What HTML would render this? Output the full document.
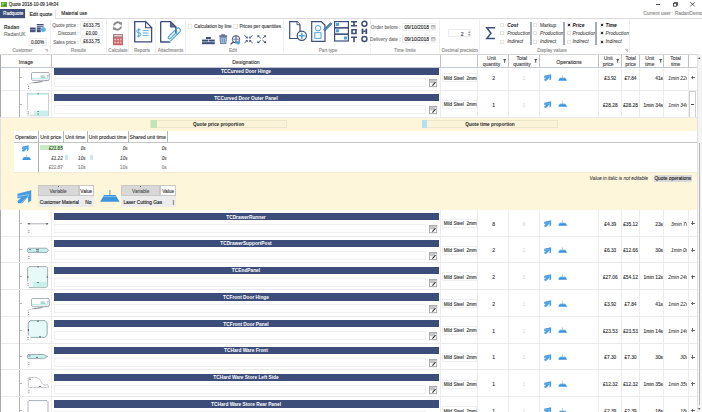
<!DOCTYPE html><html><head><meta charset="utf-8"><style>
html,body{margin:0;padding:0;}
body{width:702px;height:412px;overflow:hidden;position:relative;background:#fff;font-family:"Liberation Sans",sans-serif;}
.t{position:absolute;white-space:nowrap;line-height:1.2;-webkit-text-stroke:0.12px currentColor;}
.t[style*="italic"]{-webkit-text-stroke:0.07px currentColor;}
.t[style*="bold"]{-webkit-text-stroke:0;}
.b{position:absolute;box-sizing:border-box;}
svg.b{overflow:visible}
</style></head><body>
<svg class="b" style="left:1px;top:2px" width="6" height="5" viewBox="0 0 6 5"><rect x="0" y="0" width="6" height="5" fill="#5fae3a"/><rect x="1" y="1" width="2" height="1.5" fill="#9ad36a"/><rect x="3.2" y="2.5" width="2" height="1.5" fill="#3d8a22"/></svg>
<div class="t" style="left:8.8px;top:2.33px;font-size:4.45px;color:#222;font-weight:normal;font-style:normal;">Quote 2018-10-09 14h34</div>
<div class="b" style="left:656px;top:4px;width:4px;height:0.6px;background:#555"></div>
<svg class="b" style="left:672.6px;top:2.2px" width="5" height="4.4" viewBox="0 0 5 4.4"><rect x="0.4" y="1.3" width="3.2" height="2.9" fill="none" stroke="#333" stroke-width="0.8"/><path d="M1.4 1.3V0.4H4.5V3.4H3.6" fill="none" stroke="#333" stroke-width="0.8"/></svg>
<svg class="b" style="left:689.5px;top:1.8px" width="5" height="4.5" viewBox="0 0 5 4.5"><path d="M0.3 0.3L4.7 4.2M4.7 0.3L0.3 4.2" stroke="#333" stroke-width="0.8"/></svg>
<div class="b" style="left:0px;top:9px;width:25px;height:9px;background:#3c4d7a"></div>
<div class="t" style="left:3px;top:11.38px;font-size:4.7px;color:#fff;font-weight:normal;font-style:normal;">Radquote</div>
<div class="t" style="left:61.2px;top:11.45px;font-size:4.75px;color:#222;font-weight:normal;font-style:normal;">Material use</div>
<div class="t" style="left:502.5px;width:200px;text-align:right;top:10.93px;font-size:4.95px;color:#8a8a8a;font-weight:normal;font-style:normal;">Current user : RadanDemo</div>
<div class="b" style="left:0px;top:18px;width:702px;height:36px;background:#fff;border-top:1px solid #dadada"></div>
<div class="b" style="left:25px;top:9px;width:31px;height:10px;background:#fff;border-left:1px solid #f0f0f0;border-right:1px solid #e6e6e6"></div>
<div class="t" style="left:29.4px;top:11.24px;font-size:5.1px;color:#222;font-weight:normal;font-style:normal;">Edit quote</div>
<div class="b" style="left:50px;top:20px;width:1px;height:33px;background:#efefef"></div>
<div class="b" style="left:106px;top:20px;width:1px;height:33px;background:#efefef"></div>
<div class="b" style="left:128px;top:20px;width:1px;height:33px;background:#efefef"></div>
<div class="b" style="left:155px;top:20px;width:1px;height:33px;background:#efefef"></div>
<div class="b" style="left:185px;top:20px;width:1px;height:33px;background:#efefef"></div>
<div class="b" style="left:283px;top:20px;width:1px;height:33px;background:#efefef"></div>
<div class="b" style="left:370px;top:20px;width:1px;height:33px;background:#efefef"></div>
<div class="b" style="left:439px;top:20px;width:1px;height:33px;background:#efefef"></div>
<div class="b" style="left:479px;top:20px;width:1px;height:33px;background:#efefef"></div>
<div class="b" style="left:629px;top:20px;width:1px;height:33px;background:#efefef"></div>
<div class="t" style="left:4px;top:23.90px;font-size:5px;color:#333;font-weight:bold;font-style:normal;">Radan</div>
<div class="t" style="left:4px;top:31.00px;font-size:5px;color:#777;font-weight:normal;font-style:normal;">RadanUK</div>
<svg class="b" style="left:30px;top:23.8px" width="17" height="8.6" viewBox="0 0 17 8.6"><rect x="0" y="3.5" width="5.6" height="4.7" fill="#4a5280"/><rect x="0" y="5.4" width="5.6" height="0.7" fill="#9aa2c0"/><rect x="6.8" y="0" width="6.8" height="1.4" fill="#3c4d7a"/><rect x="6.8" y="2" width="6.8" height="1" fill="#6a78a0"/><rect x="6.8" y="3.4" width="4" height="4.8" fill="#3c4d7a"/><rect x="6.8" y="5.2" width="4" height="0.7" fill="#8a96b8"/><circle cx="13.2" cy="5.6" r="2.6" fill="#7dbcea"/><text x="13.2" y="6.9" font-size="3.6" text-anchor="middle" fill="#2f7fc0" font-family="Liberation Sans">%</text></svg>
<div class="b" style="left:28px;top:38px;width:19px;height:7.6px;border:1px solid #eeeeee;background:#fff"></div>
<div class="t" style="left:-62.5px;width:200px;text-align:center;top:39.74px;font-size:4.6px;color:#333;font-weight:normal;font-style:normal;">0.00%</div>
<div class="t" style="left:-77.5px;width:200px;text-align:center;top:48.14px;font-size:4.6px;color:#8c8c8c;font-weight:normal;font-style:normal;">Customer</div>
<svg class="b" style="left:45.3px;top:48.8px" width="3" height="3" viewBox="0 0 3 3"><path d="M0.3 0.3H2.7V2.7" fill="none" stroke="#888" stroke-width="0.5"/><path d="M0.5 0.5L2.6 2.6" stroke="#888" stroke-width="0.5"/></svg>
<div class="t" style="left:-121.5px;width:200px;text-align:right;top:22.94px;font-size:4.6px;color:#707070;font-weight:normal;font-style:normal;">Quote price :</div>
<div class="t" style="left:-121.5px;width:200px;text-align:right;top:31.24px;font-size:4.6px;color:#707070;font-weight:normal;font-style:normal;">Discount :</div>
<div class="t" style="left:-121.5px;width:200px;text-align:right;top:39.64px;font-size:4.6px;color:#707070;font-weight:normal;font-style:normal;">Sales price :</div>
<div class="b" style="left:80.4px;top:21.4px;width:22.4px;height:7.4px;border:1px solid #f0f0f0;background:#fff"></div>
<div class="t" style="left:-8.400000000000006px;width:200px;text-align:center;top:23.04px;font-size:4.6px;color:#333;font-weight:normal;font-style:normal;">£633.75</div>
<div class="b" style="left:80.4px;top:29.0px;width:22.4px;height:7.4px;border:1px solid #f0f0f0;background:#fff"></div>
<div class="t" style="left:-8.400000000000006px;width:200px;text-align:center;top:31.24px;font-size:4.6px;color:#333;font-weight:normal;font-style:normal;">£0.00</div>
<div class="b" style="left:80.4px;top:36.599999999999994px;width:22.4px;height:7.4px;border:1px solid #f0f0f0;background:#fff"></div>
<div class="t" style="left:-8.400000000000006px;width:200px;text-align:center;top:39.44px;font-size:4.6px;color:#333;font-weight:normal;font-style:normal;">£633.75</div>
<div class="t" style="left:-21.5px;width:200px;text-align:center;top:48.14px;font-size:4.6px;color:#8c8c8c;font-weight:normal;font-style:normal;">Results</div>
<svg class="b" style="left:112.2px;top:21.2px" width="11" height="10" viewBox="0 0 11 10"><g fill="none" stroke="#8a8a8a" stroke-width="2"><path d="M1.9 4.4A3.7 3.7 0 0 1 8.6 3"/><path d="M9.1 5.6A3.7 3.7 0 0 1 2.4 7"/></g><path d="M6.6 0.8L10.2 1.4L9.4 4.9Z" fill="#8a8a8a"/><path d="M4.4 9.2L0.8 8.6L1.6 5.1Z" fill="#8a8a8a"/></svg>
<svg class="b" style="left:112.6px;top:33.8px" width="10" height="11.2" viewBox="0 0 10 11.2"><rect x="0" y="0" width="10" height="11.2" rx="0.8" fill="#c96262"/><rect x="0" y="0" width="10" height="3.2" rx="0.8" fill="#9e8a8a"/><rect x="1.2" y="1" width="7.6" height="1.4" fill="#e9d0d0"/><g fill="#e8b4b4"><rect x="1.2" y="4.6" width="2" height="1.8"/><rect x="4" y="4.6" width="2" height="1.8"/><rect x="6.8" y="4.6" width="2" height="1.8"/><rect x="1.2" y="7.6" width="2" height="1.8"/><rect x="4" y="7.6" width="2" height="1.8"/><rect x="6.8" y="7.6" width="2" height="1.8"/></g></svg>
<div class="t" style="left:17.900000000000006px;width:200px;text-align:center;top:48.14px;font-size:4.6px;color:#8c8c8c;font-weight:normal;font-style:normal;">Calculate</div>
<svg class="b" style="left:134px;top:20.6px" width="18.4" height="21.6" viewBox="0 0 18.4 21.6"><path d="M0.7 0.7H11.6L17.6 6.7V20.9H0.7Z" fill="#fff" stroke="#3c4d7a" stroke-width="1.3"/><path d="M11.6 0.7V6.7H17.6Z" fill="#fff" stroke="#3c4d7a" stroke-width="1.1"/><path d="M6.6 8.6H4.4Q2.8 8.6 2.8 10.2Q2.8 11.8 4.4 11.8H5.2Q6.8 11.8 6.8 13.4Q6.8 15 5.2 15H2.8M4.8 7.2V16.4" fill="none" stroke="#4aa3df" stroke-width="1"/><path d="M8.6 9.6H14.6M8.6 12H14.6M8.6 14.4H14.6" stroke="#4aa3df" stroke-width="0.9"/></svg>
<div class="t" style="left:42px;width:200px;text-align:center;top:48.14px;font-size:4.6px;color:#8c8c8c;font-weight:normal;font-style:normal;">Reports</div>
<svg class="b" style="left:159.6px;top:20.6px" width="22.4" height="21.6" viewBox="0 0 22.4 21.6"><path d="M0.7 0.7H10.4L15.8 6.1V13.4M10.8 20.9H0.7Z" fill="#fff" stroke="#3c4d7a" stroke-width="1.3"/><path d="M0.7 0.7H10.4L15.8 6.1V14L10.6 20.9H0.7Z" fill="#fff"/><path d="M0.7 0.7V20.9H9.8M0.7 0.7H10.4L15.8 6.1V12.6" fill="none" stroke="#3c4d7a" stroke-width="1.3"/><path d="M10.4 0.7V6.1H15.8Z" fill="#5a6690" stroke="#3c4d7a" stroke-width="0.8"/><path d="M10.4 20.2L20 10.6A2.3 2.3 0 0 0 16.8 7.4L8.4 15.8A1.3 1.3 0 0 0 10.2 17.6L17.2 10.6" fill="none" stroke="#4aa3df" stroke-width="1.2"/></svg>
<div class="t" style="left:70.5px;width:200px;text-align:center;top:48.14px;font-size:4.6px;color:#8c8c8c;font-weight:normal;font-style:normal;">Attachments</div>
<div class="b" style="left:188px;top:24.3px;width:4.4px;height:4.4px;border:0.6px solid #e8e8e8;background:#fff"></div>
<div class="t" style="left:194.3px;top:24.34px;font-size:4.6px;color:#444;font-weight:normal;font-style:normal;">Calculation by line</div>
<div class="b" style="left:233.4px;top:24.3px;width:4.4px;height:4.4px;border:0.6px solid #e8e8e8;background:#fff"></div>
<div class="t" style="left:239.5px;top:24.34px;font-size:4.6px;color:#444;font-weight:normal;font-style:normal;">Prices per quantities</div>
<svg class="b" style="left:202.3px;top:36.6px" width="12.8" height="7.2" viewBox="0 0 12.8 7.2"><g fill="#3c4d7a"><rect x="4" y="0" width="4.8" height="2"/><rect x="0" y="2.6" width="6" height="2"/><rect x="6.6" y="2.6" width="6.2" height="2"/><rect x="0" y="5.2" width="12.8" height="2"/></g></svg>
<svg class="b" style="left:218.6px;top:34.2px" width="8.4" height="10" viewBox="0 0 8.4 10"><rect x="0.2" y="1.4" width="8" height="1.3" fill="#3c4d7a"/><rect x="2.8" y="0.2" width="2.8" height="1.4" fill="none" stroke="#3c4d7a" stroke-width="0.6"/><path d="M1 3.2H7.4L6.9 9.5H1.5Z" fill="#a9d3f0" stroke="#3c4d7a" stroke-width="0.7"/><path d="M3.2 4.2V8.6M5.2 4.2V8.6" stroke="#3c4d7a" stroke-width="0.6"/></svg>
<svg class="b" style="left:230.2px;top:34.6px" width="10.6" height="9.6" viewBox="0 0 10.6 9.6"><circle cx="6" cy="4.3" r="3.7" fill="#fff" stroke="#3c4d7a" stroke-width="1"/><path d="M3 4.3H9M6 0.8Q4.2 4.3 6 7.8M6 0.8Q7.8 4.3 6 7.8" fill="none" stroke="#3c4d7a" stroke-width="0.6"/><path d="M3.4 7L0.6 9.2" stroke="#3c4d7a" stroke-width="1.3"/><circle cx="8.2" cy="7.6" r="1.9" fill="#4aa3df"/></svg>
<svg class="b" style="left:244px;top:35.3px" width="9" height="8.4" viewBox="0 0 9 8.4"><g stroke="#3c4d7a" stroke-width="0.9"><path d="M0.4 0.4L3 2.6M8.6 0.4L6 2.6M0.4 8L3 5.8M8.6 8L6 5.8"/></g><g fill="#3c4d7a"><path d="M3.8 3.4L1.4 3.2L3.6 1.2Z"/><path d="M5.2 3.4L7.6 3.2L5.4 1.2Z"/><path d="M3.8 5L1.4 5.2L3.6 7.2Z"/><path d="M5.2 5L7.6 5.2L5.4 7.2Z"/></g></svg>
<svg class="b" style="left:256.6px;top:35.3px" width="9.4" height="8.4" viewBox="0 0 9.4 8.4"><g stroke="#3c4d7a" stroke-width="0.9"><path d="M1.4 1.2L3.8 3.2M8 1.2L5.6 3.2M1.4 7.2L3.8 5.2M8 7.2L5.6 5.2"/></g><g fill="#3c4d7a"><path d="M0.2 0.2L2.8 0.4L0.6 2.6Z"/><path d="M9.2 0.2L6.6 0.4L8.8 2.6Z"/><path d="M0.2 8.2L2.8 8L0.6 5.8Z"/><path d="M9.2 8.2L6.6 8L8.8 5.8Z"/></g></svg>
<div class="t" style="left:133px;width:200px;text-align:center;top:48.14px;font-size:4.6px;color:#8c8c8c;font-weight:normal;font-style:normal;">Edit</div>
<svg class="b" style="left:288.6px;top:21.4px" width="18" height="21" viewBox="0 0 18 21"><path d="M0.7 0.7H8L11 3.7V17.5H0.7Z" fill="#fff" stroke="#3c4d7a" stroke-width="1.2"/><path d="M8 0.7V3.7H11" fill="#fff" stroke="#3c4d7a" stroke-width="0.9"/><circle cx="12.8" cy="14.8" r="4.6" fill="#fff" stroke="#3c4d7a" stroke-width="1.2"/><path d="M12.8 11.8V17.8M9.8 14.8H15.8" stroke="#4aa3df" stroke-width="1.5"/></svg>
<svg class="b" style="left:310.7px;top:21.4px" width="21.3" height="21" viewBox="0 0 21.3 21"><path d="M0.7 0.7H10.5L14 4.2V20.3H0.7Z" fill="#fff" stroke="#3c4d7a" stroke-width="1.2"/><circle cx="7" cy="7.2" r="2.7" fill="none" stroke="#4aa3df" stroke-width="1"/><rect x="3.8" y="11.7" width="6.2" height="5.6" fill="none" stroke="#4aa3df" stroke-width="1"/><path d="M13 9.5L20.5 2" stroke="#3c4d7a" stroke-width="2.4"/><path d="M13.3 9.2L20.2 2.3" stroke="#4aa3df" stroke-width="1.2"/></svg>
<svg class="b" style="left:334px;top:21.4px" width="15" height="21" viewBox="0 0 15 21"><g fill="none" stroke="#3c4d7a" stroke-width="1.2"><rect x="0.6" y="0.6" width="13.8" height="6.2"/><rect x="0.6" y="6.8" width="13.8" height="6.4"/><rect x="0.6" y="13.2" width="13.8" height="6.8"/></g><rect x="2" y="2" width="3" height="3" fill="#4aa3df"/><rect x="2" y="8.3" width="3" height="3" fill="#4aa3df"/><rect x="10" y="15.5" width="3" height="3" fill="#4aa3df"/></svg>
<svg class="b" style="left:351.4px;top:21px" width="6" height="21.2" viewBox="0 0 6 21.2"><g fill="#3c4d7a"><path d="M0 0H6V1.5H4L3.6 2.6L4 4H6V5.5H0V4H2L2.4 2.6L2 1.5H0Z"/><path d="M0.2 7.9H5.8V13.3H0.2ZM1.8 9.5V11.7H4.2V9.5Z" fill-rule="evenodd"/><path d="M0 15.4H6V17H3.8V21.2H2.2V17H0Z"/></g></svg>
<svg class="b" style="left:360.8px;top:21.3px" width="6.8" height="21" viewBox="0 0 6.8 21"><g fill="none" stroke="#3c4d7a" stroke-width="1.5"><circle cx="3.4" cy="2.8" r="2.5"/><circle cx="3.4" cy="17.9" r="2.5"/></g><g fill="#3c4d7a"><rect x="0.6" y="7.6" width="1.8" height="5.4"/><rect x="4.4" y="7.6" width="1.8" height="5.4"/><rect x="2.2" y="9.5" width="2.4" height="1.6"/></g></svg>
<div class="t" style="left:228px;width:200px;text-align:center;top:48.14px;font-size:4.6px;color:#8c8c8c;font-weight:normal;font-style:normal;">Part type</div>
<div class="t" style="left:200.7px;width:200px;text-align:right;top:24.82px;font-size:4.8px;color:#777;font-weight:normal;font-style:normal;">Order before :</div>
<div class="t" style="left:200.7px;width:200px;text-align:right;top:37.22px;font-size:4.8px;color:#777;font-weight:normal;font-style:normal;">Delivery date :</div>
<div class="b" style="left:402.4px;top:23px;width:33.8px;height:8.4px;border:1px solid #f0f0f0;background:#fff"></div>
<div class="t" style="left:404.4px;top:24.86px;font-size:4.9px;color:#222;font-weight:normal;font-style:normal;">09/10/2018</div>
<svg class="b" style="left:430.6px;top:25px" width="4.2" height="4.2" viewBox="0 0 4.2 4.2"><rect x="0.3" y="0.5" width="3.6" height="3.4" rx="0.6" fill="#fff" stroke="#9a9a9a" stroke-width="0.6"/><rect x="0.3" y="0.5" width="3.6" height="1.1" fill="#9a9a9a"/><path d="M1 2.4H3.2M1 3.1H3.2" stroke="#bbb" stroke-width="0.4"/></svg>
<div class="b" style="left:402.4px;top:34.9px;width:33.8px;height:8.4px;border:1px solid #f0f0f0;background:#fff"></div>
<div class="t" style="left:404.4px;top:36.76px;font-size:4.9px;color:#222;font-weight:normal;font-style:normal;">09/10/2018</div>
<svg class="b" style="left:430.6px;top:36.9px" width="4.2" height="4.2" viewBox="0 0 4.2 4.2"><rect x="0.3" y="0.5" width="3.6" height="3.4" rx="0.6" fill="#fff" stroke="#9a9a9a" stroke-width="0.6"/><rect x="0.3" y="0.5" width="3.6" height="1.1" fill="#9a9a9a"/><path d="M1 2.4H3.2M1 3.1H3.2" stroke="#bbb" stroke-width="0.4"/></svg>
<div class="t" style="left:305px;width:200px;text-align:center;top:48.14px;font-size:4.6px;color:#8c8c8c;font-weight:normal;font-style:normal;">Time limits</div>
<div class="b" style="left:447.9px;top:29.3px;width:23.5px;height:7.7px;border:1px solid #ececec;background:#fff"></div>
<div class="t" style="left:263.6px;width:200px;text-align:right;top:30.80px;font-size:5px;color:#333;font-weight:normal;font-style:normal;">2</div>
<svg class="b" style="left:467.5px;top:30.6px" width="2.5" height="5" viewBox="0 0 2.5 5"><path d="M0 1.8L1.25 0.3L2.5 1.8Z M0 3.2L1.25 4.7L2.5 3.2Z" fill="#777"/></svg>
<div class="t" style="left:360px;width:200px;text-align:center;top:48.14px;font-size:4.6px;color:#8c8c8c;font-weight:normal;font-style:normal;">Decimal precision</div>
<svg class="b" style="left:486px;top:27px" width="9.4" height="12.4" viewBox="0 0 9.4 12.4"><path d="M9 0.8H0.8L5 6.2L0.8 11.6H9" fill="none" stroke="#3c4d7a" stroke-width="1.5"/></svg>
<div class="b" style="left:500.2px;top:22.8px;width:4.2px;height:4.2px;border:0.6px solid #e6e6e6;background:#fff"></div>
<div class="t" style="left:507.2px;top:22.56px;font-size:4.9px;color:#111;font-weight:bold;font-style:italic;">Cost</div>
<div class="b" style="left:500.2px;top:31.1px;width:4.2px;height:4.2px;border:0.6px solid #e6e6e6;background:#fff"></div>
<div class="t" style="left:507.2px;top:30.86px;font-size:4.9px;color:#444;font-weight:normal;font-style:italic;">Production</div>
<div class="b" style="left:500.2px;top:39.5px;width:4.2px;height:4.2px;border:0.6px solid #e6e6e6;background:#fff"></div>
<div class="t" style="left:507.2px;top:39.26px;font-size:4.9px;color:#444;font-weight:normal;font-style:italic;">Indirect</div>
<div class="b" style="left:532.6px;top:22.8px;width:4.2px;height:4.2px;border:0.6px solid #e6e6e6;background:#fff"></div>
<div class="t" style="left:540px;top:22.56px;font-size:4.9px;color:#555;font-weight:normal;font-style:normal;">Markup</div>
<div class="b" style="left:532.6px;top:31.1px;width:4.2px;height:4.2px;border:0.6px solid #e6e6e6;background:#fff"></div>
<div class="t" style="left:540px;top:30.86px;font-size:4.9px;color:#444;font-weight:normal;font-style:italic;">Production</div>
<div class="b" style="left:532.6px;top:39.5px;width:4.2px;height:4.2px;border:0.6px solid #e6e6e6;background:#fff"></div>
<div class="t" style="left:540px;top:39.26px;font-size:4.9px;color:#444;font-weight:normal;font-style:italic;">Indirect</div>
<div class="b" style="left:566.6px;top:22.8px;width:4.2px;height:4.2px;border:0.6px solid #e6e6e6;background:#fff"></div>
<div class="b" style="left:567.7px;top:23.900000000000002px;width:2px;height:2px;background:#333"></div>
<div class="t" style="left:572.5px;top:22.56px;font-size:4.9px;color:#111;font-weight:bold;font-style:italic;">Price</div>
<div class="b" style="left:566.6px;top:31.1px;width:4.2px;height:4.2px;border:0.6px solid #e6e6e6;background:#fff"></div>
<div class="t" style="left:572.5px;top:30.86px;font-size:4.9px;color:#444;font-weight:normal;font-style:italic;">Production</div>
<div class="b" style="left:566.6px;top:39.5px;width:4.2px;height:4.2px;border:0.6px solid #e6e6e6;background:#fff"></div>
<div class="t" style="left:572.5px;top:39.26px;font-size:4.9px;color:#444;font-weight:normal;font-style:italic;">Indirect</div>
<div class="b" style="left:599.6px;top:22.8px;width:4.2px;height:4.2px;border:0.6px solid #e6e6e6;background:#fff"></div>
<div class="b" style="left:600.7px;top:23.900000000000002px;width:2px;height:2px;background:#333"></div>
<div class="t" style="left:605.5px;top:22.56px;font-size:4.9px;color:#111;font-weight:bold;font-style:italic;">Time</div>
<div class="b" style="left:599.6px;top:31.1px;width:4.2px;height:4.2px;border:0.6px solid #e6e6e6;background:#fff"></div>
<div class="b" style="left:600.7px;top:32.2px;width:2px;height:2px;background:#333"></div>
<div class="t" style="left:605.5px;top:30.86px;font-size:4.9px;color:#444;font-weight:normal;font-style:italic;">Production</div>
<div class="b" style="left:599.6px;top:39.5px;width:4.2px;height:4.2px;border:0.6px solid #e6e6e6;background:#fff"></div>
<div class="b" style="left:600.7px;top:40.6px;width:2px;height:2px;background:#333"></div>
<div class="t" style="left:605.5px;top:39.26px;font-size:4.9px;color:#444;font-weight:normal;font-style:italic;">Indirect</div>
<div class="b" style="left:529.5px;top:21.5px;width:2px;height:23.5px;background:#a4aab8"></div>
<div class="b" style="left:562.5px;top:21.5px;width:2px;height:23.5px;background:#a4aab8"></div>
<div class="b" style="left:595.0px;top:21.5px;width:2px;height:23.5px;background:#a4aab8"></div>
<div class="t" style="left:452px;width:200px;text-align:center;top:48.14px;font-size:4.6px;color:#8c8c8c;font-weight:normal;font-style:normal;">Display values</div>
<svg class="b" style="left:625px;top:48.8px" width="3" height="3" viewBox="0 0 3 3"><path d="M0.3 0.3H2.7V2.7" fill="none" stroke="#888" stroke-width="0.5"/><path d="M0.5 0.5L2.6 2.6" stroke="#888" stroke-width="0.5"/></svg>
<div class="b" style="left:0px;top:54px;width:1px;height:358px;background:#a8a8a8"></div>
<div class="b" style="left:1px;top:67px;width:696px;height:24px;background:#fff"></div>
<svg class="b" style="left:26px;top:71.75px" width="24" height="18" viewBox="0 0 24 18"><rect x="5.5" y="0.5" width="17.8" height="7.8" rx="1.2" fill="#fff" stroke="#56606a" stroke-width="0.5"/><path d="M6 6.4H22" stroke="#9fe3da" stroke-width="0.7"/><text x="22.6" y="5.6" font-size="4.2" text-anchor="end" fill="#3a8f86" font-family="Liberation Sans">60.7</text><path d="M22.5 8.4L8 10.6Q5.6 10.8 5 11.4L1.2 12.6" fill="none" stroke="#56606a" stroke-width="0.5" stroke-dasharray="0.9 0.5"/><path d="M7.5 10.8L16 9.6" stroke="#333" stroke-width="0.5"/><rect x="1" y="12.6" width="3.8" height="5" fill="#fff"/><path d="M2.6 13.8V14.8M2.6 15.8V16.8" stroke="#333" stroke-width="0.7"/></svg>
<div class="b" style="left:20px;top:77px;width:2px;height:1px;background:#b4b4b4"></div>
<div class="b" style="left:53.5px;top:67.3px;width:385.5px;height:7.25px;background:#3c4d7a"></div>
<div class="t" style="left:146px;width:200px;text-align:center;top:68.87px;font-size:4.8px;color:#fff;font-weight:bold;font-style:normal;">TCCurved Door Hinge</div>
<div class="b" style="left:54px;top:78px;width:372px;height:9px;border:1px solid #f0f0f0;background:#fff"></div>
<svg class="b" style="left:429px;top:79.35px" width="8.2" height="8.2" viewBox="0 0 8.2 8.2"><rect x="0.5" y="0.5" width="7.2" height="7.2" fill="#fff" stroke="#a4a4a4" stroke-width="0.9"/><rect x="0.9" y="0.9" width="6.4" height="3.4" fill="#c4c4c4"/><path d="M6.2 1.6L7.2 2.6V4.8L5.6 6.6Z" fill="#fff"/><path d="M3.4 6.6L6.6 3.2" stroke="#3a3a3a" stroke-width="1.2"/></svg>
<div class="b" style="left:442px;top:73px;width:35px;height:9px;border:1px solid #f0f0f0;background:#fff"></div>
<div class="t" style="left:443.7px;top:75.59px;font-size:4.6px;color:#333;font-weight:normal;font-style:normal;">Mild Steel&nbsp; 2mm</div>
<div class="t" style="left:393.6px;width:200px;text-align:center;top:74.75px;font-size:5px;color:#333;font-weight:normal;font-style:normal;">2</div>
<div class="t" style="left:424px;width:200px;text-align:center;top:74.75px;font-size:5px;color:#dcdcdc;font-weight:normal;font-style:normal;">2</div>
<svg class="b" style="left:543.6px;top:74.35px" width="7.3" height="6.9" viewBox="0.2 1.2 16 15"><path d="M0.6 5.2L15.8 1.6V12.8L12.4 15.4L12.2 9L6 15.8L1.4 15.8L0.6 13.2L4.8 9.8L0.6 10.6Z" fill="#449be3"/><path d="M0.8 8.2L13.2 6.4M4.6 15.6L13.4 7.6" stroke="#b5ddf8" stroke-width="0.75" fill="none"/></svg>
<svg class="b" style="left:557.8px;top:74.65px" width="9.2" height="6.2" viewBox="0 0 19.6 12"><path d="M4 5H15.5L19.6 11.8H0.2Z" fill="#3b95de"/><path d="M3.2 6.6H16.4" stroke="#86c3ef" stroke-width="0.9"/><rect x="9.4" y="0" width="1" height="5.2" fill="#7c9c98"/></svg>
<div class="t" style="left:510.29999999999995px;width:200px;text-align:center;top:75.87px;font-size:4.8px;color:#333;font-weight:normal;font-style:normal;">£3.92</div>
<div class="t" style="left:530.5px;width:200px;text-align:center;top:75.87px;font-size:4.8px;color:#333;font-weight:normal;font-style:normal;">£7.84</div>
<div class="t" style="left:463px;width:200px;text-align:right;top:75.87px;font-size:4.8px;color:#333;font-weight:normal;font-style:normal;">41s</div>
<div class="b" style="left:664px;top:73.25px;width:22.6px;height:9px;overflow:hidden"><div class="t" style="right:-1.6px;top:2.60px;font-size:4.9px;color:#333;font-style:italic">1min 22s</div></div>
<div class="b" style="left:691px;top:77.15px;width:3.6px;height:0.8px;background:#6a6a6a"></div>
<div class="b" style="left:692.4px;top:75.65px;width:0.8px;height:3.8px;background:#6a6a6a"></div>
<div class="b" style="left:1px;top:90px;width:696px;height:28px;background:#fff"></div>
<svg class="b" style="left:26px;top:93.0px" width="24" height="23" viewBox="0 0 24 23"><rect x="1.5" y="0.3" width="20.8" height="22.6" fill="#fff" stroke="#7a8a90" stroke-width="0.4"/><rect x="1.7" y="0.5" width="20.4" height="1.6" fill="#c8f0ec"/><rect x="8" y="17.5" width="14.1" height="5.2" fill="#c8f0ec"/><path d="M11.5 0.8H13M11.5 18.5H13M11.5 21H13" stroke="#333" stroke-width="0.6"/><rect x="0.6" y="17" width="4" height="5.4" fill="#fff" stroke="#e6e8ea" stroke-width="0.4"/><path d="M2.1 18.4V19.3M2.1 20.3V21.2" stroke="#333" stroke-width="0.8"/></svg>
<div class="b" style="left:20px;top:104px;width:2px;height:1px;background:#b4b4b4"></div>
<div class="b" style="left:53.5px;top:94.0px;width:385.5px;height:7.299999999999997px;background:#3c4d7a"></div>
<div class="t" style="left:146px;width:200px;text-align:center;top:95.62px;font-size:4.8px;color:#fff;font-weight:bold;font-style:normal;">TCCurved Door Outer Panel</div>
<div class="b" style="left:54px;top:105px;width:372px;height:9px;border:1px solid #f0f0f0;background:#fff"></div>
<svg class="b" style="left:429px;top:106.1px" width="8.2" height="8.2" viewBox="0 0 8.2 8.2"><rect x="0.5" y="0.5" width="7.2" height="7.2" fill="#fff" stroke="#a4a4a4" stroke-width="0.9"/><rect x="0.9" y="0.9" width="6.4" height="3.4" fill="#c4c4c4"/><path d="M6.2 1.6L7.2 2.6V4.8L5.6 6.6Z" fill="#fff"/><path d="M3.4 6.6L6.6 3.2" stroke="#3a3a3a" stroke-width="1.2"/></svg>
<div class="b" style="left:442px;top:100px;width:35px;height:9px;border:1px solid #f0f0f0;background:#fff"></div>
<div class="t" style="left:443.7px;top:102.34px;font-size:4.6px;color:#333;font-weight:normal;font-style:normal;">Mild Steel&nbsp; 2mm</div>
<div class="t" style="left:393.6px;width:200px;text-align:center;top:101.50px;font-size:5px;color:#333;font-weight:normal;font-style:normal;">1</div>
<div class="t" style="left:424px;width:200px;text-align:center;top:101.50px;font-size:5px;color:#dcdcdc;font-weight:normal;font-style:normal;">1</div>
<svg class="b" style="left:543.6px;top:101.1px" width="7.3" height="6.9" viewBox="0.2 1.2 16 15"><path d="M0.6 5.2L15.8 1.6V12.8L12.4 15.4L12.2 9L6 15.8L1.4 15.8L0.6 13.2L4.8 9.8L0.6 10.6Z" fill="#449be3"/><path d="M0.8 8.2L13.2 6.4M4.6 15.6L13.4 7.6" stroke="#b5ddf8" stroke-width="0.75" fill="none"/></svg>
<svg class="b" style="left:557.8px;top:101.4px" width="9.2" height="6.2" viewBox="0 0 19.6 12"><path d="M4 5H15.5L19.6 11.8H0.2Z" fill="#3b95de"/><path d="M3.2 6.6H16.4" stroke="#86c3ef" stroke-width="0.9"/><rect x="9.4" y="0" width="1" height="5.2" fill="#7c9c98"/></svg>
<div class="t" style="left:510.29999999999995px;width:200px;text-align:center;top:102.62px;font-size:4.8px;color:#333;font-weight:normal;font-style:normal;">£28.28</div>
<div class="t" style="left:530.5px;width:200px;text-align:center;top:102.62px;font-size:4.8px;color:#333;font-weight:normal;font-style:normal;">£28.28</div>
<div class="t" style="left:463px;width:200px;text-align:right;top:102.62px;font-size:4.8px;color:#333;font-weight:normal;font-style:normal;">1min 34s</div>
<div class="b" style="left:664px;top:100.00px;width:22.6px;height:9px;overflow:hidden"><div class="t" style="right:-1.6px;top:2.60px;font-size:4.9px;color:#333;font-style:italic">1min 34s</div></div>
<div class="b" style="left:689px;top:91px;width:7px;height:27px;border:1px solid #d0d0d0;background:#fff"></div>
<div class="b" style="left:690.5px;top:104px;width:3.5px;height:1px;background:#444"></div>
<div class="b" style="left:19px;top:67px;width:1px;height:24px;background:#b0b0b0"></div>
<div class="b" style="left:1px;top:90px;width:696px;height:1px;background:#eaeaea"></div>
<div class="b" style="left:51px;top:67px;width:1px;height:23px;background:#ececec"></div>
<div class="b" style="left:440px;top:67px;width:1px;height:23px;background:#ececec"></div>
<div class="b" style="left:477px;top:67px;width:1px;height:23px;background:#ececec"></div>
<div class="b" style="left:508px;top:67px;width:1px;height:23px;background:#ececec"></div>
<div class="b" style="left:539px;top:67px;width:1px;height:23px;background:#ececec"></div>
<div class="b" style="left:598px;top:67px;width:1px;height:23px;background:#ececec"></div>
<div class="b" style="left:621px;top:67px;width:1px;height:23px;background:#ececec"></div>
<div class="b" style="left:639px;top:67px;width:1px;height:23px;background:#ececec"></div>
<div class="b" style="left:663px;top:67px;width:1px;height:23px;background:#ececec"></div>
<div class="b" style="left:688px;top:67px;width:1px;height:23px;background:#ececec"></div>
<div class="b" style="left:19px;top:90px;width:1px;height:28px;background:#b0b0b0"></div>
<div class="b" style="left:1px;top:117px;width:696px;height:1px;background:#eaeaea"></div>
<div class="b" style="left:51px;top:90px;width:1px;height:27px;background:#ececec"></div>
<div class="b" style="left:440px;top:90px;width:1px;height:27px;background:#ececec"></div>
<div class="b" style="left:477px;top:90px;width:1px;height:27px;background:#ececec"></div>
<div class="b" style="left:508px;top:90px;width:1px;height:27px;background:#ececec"></div>
<div class="b" style="left:539px;top:90px;width:1px;height:27px;background:#ececec"></div>
<div class="b" style="left:598px;top:90px;width:1px;height:27px;background:#ececec"></div>
<div class="b" style="left:621px;top:90px;width:1px;height:27px;background:#ececec"></div>
<div class="b" style="left:639px;top:90px;width:1px;height:27px;background:#ececec"></div>
<div class="b" style="left:663px;top:90px;width:1px;height:27px;background:#ececec"></div>
<div class="b" style="left:688px;top:90px;width:1px;height:27px;background:#ececec"></div>
<div class="b" style="left:1px;top:117.5px;width:695.5px;height:92px;background:#fef6db"></div>
<div class="b" style="left:150.3px;top:120px;width:136.7px;height:8.4px;border:0.6px solid #ece6cc;background:#fbf4d8"></div>
<div class="b" style="left:150.6px;top:120.3px;width:6.4px;height:7.8px;background:#bfe5b8"></div>
<div class="t" style="left:118.6px;width:200px;text-align:center;top:122.08px;font-size:4.7px;color:#222;font-weight:bold;font-style:normal;">Quote price proportion</div>
<div class="b" style="left:421.6px;top:120px;width:136.7px;height:8.4px;border:0.6px solid #ece6cc;background:#fbf4d8"></div>
<div class="b" style="left:421.9px;top:120.3px;width:5.1px;height:7.8px;background:#b6e0ef"></div>
<div class="t" style="left:390px;width:200px;text-align:center;top:122.08px;font-size:4.7px;color:#222;font-weight:bold;font-style:normal;">Quote time proportion</div>
<div class="b" style="left:13.5px;top:130.6px;width:683px;height:41.6px;background:#fff"></div>
<div class="b" style="left:13.5px;top:130.6px;width:154px;height:11.6px;background:#fff"></div>
<div class="b" style="left:13.5px;top:142px;width:683px;height:1px;background:#c4c4c4"></div>
<div class="b" style="left:38.2px;top:130.6px;width:0.8px;height:11.4px;background:#b9b9b9"></div>
<div class="b" style="left:63.4px;top:130.6px;width:0.8px;height:11.4px;background:#b9b9b9"></div>
<div class="b" style="left:86.8px;top:130.6px;width:0.8px;height:11.4px;background:#b9b9b9"></div>
<div class="b" style="left:128.4px;top:130.6px;width:0.8px;height:11.4px;background:#b9b9b9"></div>
<div class="b" style="left:167.2px;top:130.6px;width:0.8px;height:11.4px;background:#b9b9b9"></div>
<div class="b" style="left:38px;top:143px;width:1px;height:29px;background:#b0b0b0"></div>
<div class="b" style="left:13.5px;top:172px;width:683px;height:1px;background:#f3ecd4"></div>
<div class="t" style="left:-74.1px;width:200px;text-align:center;top:134.10px;font-size:5.0px;color:#333;font-weight:normal;font-style:normal;">Operation</div>
<div class="t" style="left:-49.2px;width:200px;text-align:center;top:134.10px;font-size:5.0px;color:#333;font-weight:normal;font-style:normal;">Unit price</div>
<div class="t" style="left:-24.900000000000006px;width:200px;text-align:center;top:134.10px;font-size:5.0px;color:#333;font-weight:normal;font-style:normal;">Unit time</div>
<div class="t" style="left:7.599999999999994px;width:200px;text-align:center;top:134.10px;font-size:5.0px;color:#333;font-weight:normal;font-style:normal;">Unit product time</div>
<div class="t" style="left:47.80000000000001px;width:200px;text-align:center;top:134.10px;font-size:5.0px;color:#333;font-weight:normal;font-style:normal;">Shared unit time</div>
<svg class="b" style="left:21.4px;top:145px" width="8.6" height="6.6" viewBox="0.2 1.2 16 15"><path d="M0.6 5.2L15.8 1.6V12.8L12.4 15.4L12.2 9L6 15.8L1.4 15.8L0.6 13.2L4.8 9.8L0.6 10.6Z" fill="#449be3"/><path d="M0.8 8.2L13.2 6.4M4.6 15.6L13.4 7.6" stroke="#b5ddf8" stroke-width="0.75" fill="none"/></svg>
<svg class="b" style="left:22px;top:154px" width="9" height="6.7" viewBox="0 0 19.6 12"><path d="M4 5H15.5L19.6 11.8H0.2Z" fill="#3b95de"/><path d="M3.2 6.6H16.4" stroke="#86c3ef" stroke-width="0.9"/><rect x="9.4" y="0" width="1" height="5.2" fill="#7c9c98"/></svg>
<div class="b" style="left:40.3px;top:145.3px;width:22.4px;height:5px;background:#c5ecc0"></div>
<div class="t" style="left:-137.3px;width:200px;text-align:right;top:145.74px;font-size:4.6px;color:#333;font-weight:normal;font-style:italic;">£21.65</div>
<div class="t" style="left:-137.3px;width:200px;text-align:right;top:155.74px;font-size:4.6px;color:#333;font-weight:normal;font-style:italic;">£1.22</div>
<div class="t" style="left:-137.3px;width:200px;text-align:right;top:165.44px;font-size:4.6px;color:#888;font-weight:normal;font-style:normal;">£22.87</div>
<div class="b" style="left:65.2px;top:155px;width:2.6px;height:5.4px;background:#c8e8f4"></div>
<div class="b" style="left:89.8px;top:155px;width:3px;height:5.4px;background:#c8e8f4"></div>
<div class="t" style="left:-114.5px;width:200px;text-align:right;top:145.74px;font-size:4.6px;color:#333;font-weight:normal;font-style:italic;">0s</div>
<div class="t" style="left:-114.5px;width:200px;text-align:right;top:155.74px;font-size:4.6px;color:#333;font-weight:normal;font-style:italic;">10s</div>
<div class="t" style="left:-114.5px;width:200px;text-align:right;top:165.44px;font-size:4.6px;color:#888;font-weight:normal;font-style:normal;">10s</div>
<div class="t" style="left:-72.5px;width:200px;text-align:right;top:145.74px;font-size:4.6px;color:#333;font-weight:normal;font-style:italic;">0s</div>
<div class="t" style="left:-72.5px;width:200px;text-align:right;top:155.74px;font-size:4.6px;color:#333;font-weight:normal;font-style:italic;">10s</div>
<div class="t" style="left:-72.5px;width:200px;text-align:right;top:165.44px;font-size:4.6px;color:#888;font-weight:normal;font-style:normal;">10s</div>
<div class="t" style="left:-33.5px;width:200px;text-align:right;top:145.74px;font-size:4.6px;color:#333;font-weight:normal;font-style:italic;">0s</div>
<div class="t" style="left:-33.5px;width:200px;text-align:right;top:155.74px;font-size:4.6px;color:#333;font-weight:normal;font-style:italic;">0s</div>
<div class="t" style="left:-33.5px;width:200px;text-align:right;top:165.44px;font-size:4.6px;color:#888;font-weight:normal;font-style:normal;">0s</div>
<div class="t" style="left:448px;width:200px;text-align:right;top:176.05px;font-size:4.75px;color:#333;font-weight:normal;font-style:italic;">Value in italic is not editable</div>
<div class="b" style="left:654px;top:174.6px;width:37.6px;height:7.2px;background:#d9d9d9"></div>
<div class="t" style="left:572.8px;width:200px;text-align:center;top:176.02px;font-size:4.8px;color:#222;font-weight:normal;font-style:normal;">Quote operations</div>
<svg class="b" style="left:17.2px;top:189.6px" width="14.7" height="13.6" viewBox="0.2 1.2 16 15"><path d="M0.6 5.2L15.8 1.6V12.8L12.4 15.4L12.2 9L6 15.8L1.4 15.8L0.6 13.2L4.8 9.8L0.6 10.6Z" fill="#449be3"/><path d="M0.8 8.2L13.2 6.4M4.6 15.6L13.4 7.6" stroke="#b5ddf8" stroke-width="0.75" fill="none"/></svg>
<div class="b" style="left:37.7px;top:184.7px;width:40.9px;height:11.7px;background:#d8d8d8;border:0.6px solid #c8c8c8"></div>
<div class="b" style="left:78.6px;top:184.7px;width:15.4px;height:11.7px;background:#fff;border:0.6px solid #c8c8c8"></div>
<div class="t" style="left:-41.849999999999994px;width:200px;text-align:center;top:188.82px;font-size:4.8px;color:#555;font-weight:normal;font-style:normal;">Variable</div>
<div class="t" style="left:-13.700000000000003px;width:200px;text-align:center;top:188.62px;font-size:4.8px;color:#333;font-weight:normal;font-style:normal;">Value</div>
<div class="b" style="left:57.85000000000001px;top:185.6px;width:0.8px;height:0.8px;background:#666"></div>
<div class="b" style="left:37.7px;top:196.4px;width:56.3px;height:10.6px;background:#ececec"></div>
<div class="t" style="left:39.7px;top:199.62px;font-size:4.8px;color:#222;font-weight:normal;font-style:normal;">Customer Material</div>
<div class="t" style="left:-108.5px;width:200px;text-align:right;top:199.62px;font-size:4.8px;color:#222;font-weight:normal;font-style:normal;">No</div>
<svg class="b" style="left:100px;top:190px" width="19.6" height="12" viewBox="0 0 19.6 12"><path d="M4 5H15.5L19.6 11.8H0.2Z" fill="#3b95de"/><path d="M3.2 6.6H16.4" stroke="#86c3ef" stroke-width="0.9"/><rect x="9.4" y="0" width="1" height="5.2" fill="#7c9c98"/></svg>
<div class="b" style="left:121.4px;top:184.7px;width:38.6px;height:11.7px;background:#d8d8d8;border:0.6px solid #c8c8c8"></div>
<div class="b" style="left:160.0px;top:184.7px;width:16.4px;height:11.7px;background:#fff;border:0.6px solid #c8c8c8"></div>
<div class="t" style="left:40.70000000000002px;width:200px;text-align:center;top:188.82px;font-size:4.8px;color:#555;font-weight:normal;font-style:normal;">Variable</div>
<div class="t" style="left:68.20000000000002px;width:200px;text-align:center;top:188.62px;font-size:4.8px;color:#333;font-weight:normal;font-style:normal;">Value</div>
<div class="b" style="left:140.4px;top:185.6px;width:0.8px;height:0.8px;background:#666"></div>
<div class="b" style="left:121.4px;top:196.4px;width:55px;height:10.6px;background:#ececec"></div>
<div class="t" style="left:123.4px;top:199.62px;font-size:4.8px;color:#222;font-weight:normal;font-style:normal;">Laser Cutting Gas</div>
<div class="t" style="left:-26.099999999999994px;width:200px;text-align:right;top:199.62px;font-size:4.8px;color:#222;font-weight:normal;font-style:normal;">|</div>
<div class="b" style="left:0px;top:117.5px;width:1.2px;height:92px;background:#9a9a9a"></div>
<div class="b" style="left:1px;top:210px;width:696px;height:27px;background:#fff"></div>
<svg class="b" style="left:26px;top:219.5px" width="24" height="15" viewBox="0 0 24 15"><path d="M1.2 3.8H22" stroke="#56606a" stroke-width="0.5"/><path d="M20.4 2.9L22.6 3.8L20.4 4.7Z" fill="#333"/><path d="M2 3.8H4" stroke="#333" stroke-width="0.8"/><rect x="1.4" y="8.5" width="4" height="5.4" fill="#fff" stroke="#e6e8ea" stroke-width="0.4"/><path d="M2.9 9.9V10.8M2.9 11.8V12.7" stroke="#333" stroke-width="0.8"/></svg>
<div class="b" style="left:20px;top:223px;width:2px;height:1px;background:#b4b4b4"></div>
<div class="b" style="left:53.5px;top:213.0px;width:385.5px;height:7.300000000000011px;background:#3c4d7a"></div>
<div class="t" style="left:146px;width:200px;text-align:center;top:214.62px;font-size:4.8px;color:#fff;font-weight:bold;font-style:normal;">TCDrawerRunner</div>
<div class="b" style="left:54px;top:224px;width:372px;height:9px;border:1px solid #f0f0f0;background:#fff"></div>
<svg class="b" style="left:429px;top:225.1px" width="8.2" height="8.2" viewBox="0 0 8.2 8.2"><rect x="0.5" y="0.5" width="7.2" height="7.2" fill="#fff" stroke="#a4a4a4" stroke-width="0.9"/><rect x="0.9" y="0.9" width="6.4" height="3.4" fill="#c4c4c4"/><path d="M6.2 1.6L7.2 2.6V4.8L5.6 6.6Z" fill="#fff"/><path d="M3.4 6.6L6.6 3.2" stroke="#3a3a3a" stroke-width="1.2"/></svg>
<div class="b" style="left:442px;top:219px;width:35px;height:9px;border:1px solid #f0f0f0;background:#fff"></div>
<div class="t" style="left:443.7px;top:221.34px;font-size:4.6px;color:#333;font-weight:normal;font-style:normal;">Mild Steel&nbsp; 2mm</div>
<div class="t" style="left:393.6px;width:200px;text-align:center;top:220.50px;font-size:5px;color:#333;font-weight:normal;font-style:normal;">8</div>
<div class="t" style="left:424px;width:200px;text-align:center;top:220.50px;font-size:5px;color:#dcdcdc;font-weight:normal;font-style:normal;">8</div>
<svg class="b" style="left:543.6px;top:220.1px" width="7.3" height="6.9" viewBox="0.2 1.2 16 15"><path d="M0.6 5.2L15.8 1.6V12.8L12.4 15.4L12.2 9L6 15.8L1.4 15.8L0.6 13.2L4.8 9.8L0.6 10.6Z" fill="#449be3"/><path d="M0.8 8.2L13.2 6.4M4.6 15.6L13.4 7.6" stroke="#b5ddf8" stroke-width="0.75" fill="none"/></svg>
<svg class="b" style="left:557.8px;top:220.4px" width="9.2" height="6.2" viewBox="0 0 19.6 12"><path d="M4 5H15.5L19.6 11.8H0.2Z" fill="#3b95de"/><path d="M3.2 6.6H16.4" stroke="#86c3ef" stroke-width="0.9"/><rect x="9.4" y="0" width="1" height="5.2" fill="#7c9c98"/></svg>
<div class="t" style="left:510.29999999999995px;width:200px;text-align:center;top:221.62px;font-size:4.8px;color:#333;font-weight:normal;font-style:normal;">£4.39</div>
<div class="t" style="left:530.5px;width:200px;text-align:center;top:221.62px;font-size:4.8px;color:#333;font-weight:normal;font-style:normal;">£35.12</div>
<div class="t" style="left:463px;width:200px;text-align:right;top:221.62px;font-size:4.8px;color:#333;font-weight:normal;font-style:normal;">23s</div>
<div class="b" style="left:664px;top:219.00px;width:22.6px;height:9px;overflow:hidden"><div class="t" style="right:-1.6px;top:2.60px;font-size:4.9px;color:#333;font-style:italic">3min 7s</div></div>
<div class="b" style="left:691px;top:222.9px;width:3.6px;height:0.8px;background:#6a6a6a"></div>
<div class="b" style="left:692.4px;top:221.4px;width:0.8px;height:3.8px;background:#6a6a6a"></div>
<div class="b" style="left:1px;top:236px;width:696px;height:27px;background:#fff"></div>
<svg class="b" style="left:26px;top:246.25px" width="24" height="15" viewBox="0 0 24 15"><path d="M2 2.2H20.6L22.6 4.4L20.6 6.4H2L1.2 4.3Z" fill="#c8f0ec" stroke="#56606a" stroke-width="0.5"/><path d="M3 3.6H5M10 3.4H13M10 5.2H13" stroke="#333" stroke-width="0.6"/><rect x="1.4" y="8.6" width="4" height="5.4" fill="#fff" stroke="#e6e8ea" stroke-width="0.4"/><path d="M2.9 10V10.9M2.9 11.9V12.8" stroke="#333" stroke-width="0.8"/></svg>
<div class="b" style="left:20px;top:249px;width:2px;height:1px;background:#b4b4b4"></div>
<div class="b" style="left:53.5px;top:239.75px;width:385.5px;height:7.300000000000011px;background:#3c4d7a"></div>
<div class="t" style="left:146px;width:200px;text-align:center;top:241.37px;font-size:4.8px;color:#fff;font-weight:bold;font-style:normal;">TCDrawerSupportPost</div>
<div class="b" style="left:54px;top:251px;width:372px;height:9px;border:1px solid #f0f0f0;background:#fff"></div>
<svg class="b" style="left:429px;top:251.85px" width="8.2" height="8.2" viewBox="0 0 8.2 8.2"><rect x="0.5" y="0.5" width="7.2" height="7.2" fill="#fff" stroke="#a4a4a4" stroke-width="0.9"/><rect x="0.9" y="0.9" width="6.4" height="3.4" fill="#c4c4c4"/><path d="M6.2 1.6L7.2 2.6V4.8L5.6 6.6Z" fill="#fff"/><path d="M3.4 6.6L6.6 3.2" stroke="#3a3a3a" stroke-width="1.2"/></svg>
<div class="b" style="left:442px;top:246px;width:35px;height:9px;border:1px solid #f0f0f0;background:#fff"></div>
<div class="t" style="left:443.7px;top:248.09px;font-size:4.6px;color:#333;font-weight:normal;font-style:normal;">Mild Steel&nbsp; 2mm</div>
<div class="t" style="left:393.6px;width:200px;text-align:center;top:247.25px;font-size:5px;color:#333;font-weight:normal;font-style:normal;">2</div>
<div class="t" style="left:424px;width:200px;text-align:center;top:247.25px;font-size:5px;color:#dcdcdc;font-weight:normal;font-style:normal;">2</div>
<svg class="b" style="left:543.6px;top:246.85px" width="7.3" height="6.9" viewBox="0.2 1.2 16 15"><path d="M0.6 5.2L15.8 1.6V12.8L12.4 15.4L12.2 9L6 15.8L1.4 15.8L0.6 13.2L4.8 9.8L0.6 10.6Z" fill="#449be3"/><path d="M0.8 8.2L13.2 6.4M4.6 15.6L13.4 7.6" stroke="#b5ddf8" stroke-width="0.75" fill="none"/></svg>
<svg class="b" style="left:557.8px;top:247.15px" width="9.2" height="6.2" viewBox="0 0 19.6 12"><path d="M4 5H15.5L19.6 11.8H0.2Z" fill="#3b95de"/><path d="M3.2 6.6H16.4" stroke="#86c3ef" stroke-width="0.9"/><rect x="9.4" y="0" width="1" height="5.2" fill="#7c9c98"/></svg>
<div class="t" style="left:510.29999999999995px;width:200px;text-align:center;top:248.37px;font-size:4.8px;color:#333;font-weight:normal;font-style:normal;">£6.33</div>
<div class="t" style="left:530.5px;width:200px;text-align:center;top:248.37px;font-size:4.8px;color:#333;font-weight:normal;font-style:normal;">£12.66</div>
<div class="t" style="left:463px;width:200px;text-align:right;top:248.37px;font-size:4.8px;color:#333;font-weight:normal;font-style:normal;">30s</div>
<div class="b" style="left:664px;top:245.75px;width:22.6px;height:9px;overflow:hidden"><div class="t" style="right:-1.6px;top:2.60px;font-size:4.9px;color:#333;font-style:italic">1min 0s</div></div>
<div class="b" style="left:691px;top:249.65px;width:3.6px;height:0.8px;background:#6a6a6a"></div>
<div class="b" style="left:692.4px;top:248.15px;width:0.8px;height:3.8px;background:#6a6a6a"></div>
<div class="b" style="left:1px;top:263px;width:696px;height:27px;background:#fff"></div>
<svg class="b" style="left:26px;top:266.0px" width="24" height="23" viewBox="0 0 24 23"><path d="M3 0.6H20.2L21.6 2V20.2L20.2 21.6H3L1.6 20.2V2Z" fill="#e8faf8" stroke="#56606a" stroke-width="0.5"/><rect x="7" y="16" width="14.2" height="5.2" fill="#c8f0ec"/><path d="M11 0.9H13M11 16.6H13M21.2 10V12M1.9 10V12" stroke="#333" stroke-width="0.6"/><rect x="0.6" y="15.6" width="4" height="5.4" fill="#fff" stroke="#e6e8ea" stroke-width="0.4"/><path d="M2.1 17V17.9M2.1 18.9V19.8" stroke="#333" stroke-width="0.8"/></svg>
<div class="b" style="left:20px;top:276px;width:2px;height:1px;background:#b4b4b4"></div>
<div class="b" style="left:53.5px;top:266.5px;width:385.5px;height:7.300000000000011px;background:#3c4d7a"></div>
<div class="t" style="left:146px;width:200px;text-align:center;top:268.12px;font-size:4.8px;color:#fff;font-weight:bold;font-style:normal;">TCEndPanel</div>
<div class="b" style="left:54px;top:278px;width:372px;height:9px;border:1px solid #f0f0f0;background:#fff"></div>
<svg class="b" style="left:429px;top:278.6px" width="8.2" height="8.2" viewBox="0 0 8.2 8.2"><rect x="0.5" y="0.5" width="7.2" height="7.2" fill="#fff" stroke="#a4a4a4" stroke-width="0.9"/><rect x="0.9" y="0.9" width="6.4" height="3.4" fill="#c4c4c4"/><path d="M6.2 1.6L7.2 2.6V4.8L5.6 6.6Z" fill="#fff"/><path d="M3.4 6.6L6.6 3.2" stroke="#3a3a3a" stroke-width="1.2"/></svg>
<div class="b" style="left:442px;top:272px;width:35px;height:9px;border:1px solid #f0f0f0;background:#fff"></div>
<div class="t" style="left:443.7px;top:274.84px;font-size:4.6px;color:#333;font-weight:normal;font-style:normal;">Mild Steel&nbsp; 2mm</div>
<div class="t" style="left:393.6px;width:200px;text-align:center;top:274.00px;font-size:5px;color:#333;font-weight:normal;font-style:normal;">2</div>
<div class="t" style="left:424px;width:200px;text-align:center;top:274.00px;font-size:5px;color:#dcdcdc;font-weight:normal;font-style:normal;">2</div>
<svg class="b" style="left:543.6px;top:273.6px" width="7.3" height="6.9" viewBox="0.2 1.2 16 15"><path d="M0.6 5.2L15.8 1.6V12.8L12.4 15.4L12.2 9L6 15.8L1.4 15.8L0.6 13.2L4.8 9.8L0.6 10.6Z" fill="#449be3"/><path d="M0.8 8.2L13.2 6.4M4.6 15.6L13.4 7.6" stroke="#b5ddf8" stroke-width="0.75" fill="none"/></svg>
<svg class="b" style="left:557.8px;top:273.9px" width="9.2" height="6.2" viewBox="0 0 19.6 12"><path d="M4 5H15.5L19.6 11.8H0.2Z" fill="#3b95de"/><path d="M3.2 6.6H16.4" stroke="#86c3ef" stroke-width="0.9"/><rect x="9.4" y="0" width="1" height="5.2" fill="#7c9c98"/></svg>
<div class="t" style="left:510.29999999999995px;width:200px;text-align:center;top:275.12px;font-size:4.8px;color:#333;font-weight:normal;font-style:normal;">£27.06</div>
<div class="t" style="left:530.5px;width:200px;text-align:center;top:275.12px;font-size:4.8px;color:#333;font-weight:normal;font-style:normal;">£54.12</div>
<div class="t" style="left:463px;width:200px;text-align:right;top:275.12px;font-size:4.8px;color:#333;font-weight:normal;font-style:normal;">1min 12s</div>
<div class="b" style="left:664px;top:272.50px;width:22.6px;height:9px;overflow:hidden"><div class="t" style="right:-1.6px;top:2.60px;font-size:4.9px;color:#333;font-style:italic">2min 24s</div></div>
<div class="b" style="left:691px;top:276.4px;width:3.6px;height:0.8px;background:#6a6a6a"></div>
<div class="b" style="left:692.4px;top:274.9px;width:0.8px;height:3.8px;background:#6a6a6a"></div>
<div class="b" style="left:1px;top:290px;width:696px;height:27px;background:#fff"></div>
<svg class="b" style="left:26px;top:297.75px" width="24" height="18" viewBox="0 0 24 18"><rect x="5.5" y="0.5" width="17.8" height="7.8" rx="1.2" fill="#fff" stroke="#56606a" stroke-width="0.5"/><path d="M6 6.4H22" stroke="#9fe3da" stroke-width="0.7"/><text x="22.6" y="5.6" font-size="4.2" text-anchor="end" fill="#3a8f86" font-family="Liberation Sans">60.7</text><path d="M22.5 8.4L8 10.6Q5.6 10.8 5 11.4L1.2 12.6" fill="none" stroke="#56606a" stroke-width="0.5" stroke-dasharray="0.9 0.5"/><path d="M7.5 10.8L16 9.6" stroke="#333" stroke-width="0.5"/><rect x="1" y="12.6" width="3.8" height="5" fill="#fff"/><path d="M2.6 13.8V14.8M2.6 15.8V16.8" stroke="#333" stroke-width="0.7"/></svg>
<div class="b" style="left:20px;top:303px;width:2px;height:1px;background:#b4b4b4"></div>
<div class="b" style="left:53.5px;top:293.25px;width:385.5px;height:7.300000000000011px;background:#3c4d7a"></div>
<div class="t" style="left:146px;width:200px;text-align:center;top:294.87px;font-size:4.8px;color:#fff;font-weight:bold;font-style:normal;">TCFront Door Hinge</div>
<div class="b" style="left:54px;top:304px;width:372px;height:9px;border:1px solid #f0f0f0;background:#fff"></div>
<svg class="b" style="left:429px;top:305.35px" width="8.2" height="8.2" viewBox="0 0 8.2 8.2"><rect x="0.5" y="0.5" width="7.2" height="7.2" fill="#fff" stroke="#a4a4a4" stroke-width="0.9"/><rect x="0.9" y="0.9" width="6.4" height="3.4" fill="#c4c4c4"/><path d="M6.2 1.6L7.2 2.6V4.8L5.6 6.6Z" fill="#fff"/><path d="M3.4 6.6L6.6 3.2" stroke="#3a3a3a" stroke-width="1.2"/></svg>
<div class="b" style="left:442px;top:299px;width:35px;height:9px;border:1px solid #f0f0f0;background:#fff"></div>
<div class="t" style="left:443.7px;top:301.59px;font-size:4.6px;color:#333;font-weight:normal;font-style:normal;">Mild Steel&nbsp; 2mm</div>
<div class="t" style="left:393.6px;width:200px;text-align:center;top:300.75px;font-size:5px;color:#333;font-weight:normal;font-style:normal;">2</div>
<div class="t" style="left:424px;width:200px;text-align:center;top:300.75px;font-size:5px;color:#dcdcdc;font-weight:normal;font-style:normal;">2</div>
<svg class="b" style="left:543.6px;top:300.35px" width="7.3" height="6.9" viewBox="0.2 1.2 16 15"><path d="M0.6 5.2L15.8 1.6V12.8L12.4 15.4L12.2 9L6 15.8L1.4 15.8L0.6 13.2L4.8 9.8L0.6 10.6Z" fill="#449be3"/><path d="M0.8 8.2L13.2 6.4M4.6 15.6L13.4 7.6" stroke="#b5ddf8" stroke-width="0.75" fill="none"/></svg>
<svg class="b" style="left:557.8px;top:300.65px" width="9.2" height="6.2" viewBox="0 0 19.6 12"><path d="M4 5H15.5L19.6 11.8H0.2Z" fill="#3b95de"/><path d="M3.2 6.6H16.4" stroke="#86c3ef" stroke-width="0.9"/><rect x="9.4" y="0" width="1" height="5.2" fill="#7c9c98"/></svg>
<div class="t" style="left:510.29999999999995px;width:200px;text-align:center;top:301.87px;font-size:4.8px;color:#333;font-weight:normal;font-style:normal;">£3.92</div>
<div class="t" style="left:530.5px;width:200px;text-align:center;top:301.87px;font-size:4.8px;color:#333;font-weight:normal;font-style:normal;">£7.84</div>
<div class="t" style="left:463px;width:200px;text-align:right;top:301.87px;font-size:4.8px;color:#333;font-weight:normal;font-style:normal;">41s</div>
<div class="b" style="left:664px;top:299.25px;width:22.6px;height:9px;overflow:hidden"><div class="t" style="right:-1.6px;top:2.60px;font-size:4.9px;color:#333;font-style:italic">1min 22s</div></div>
<div class="b" style="left:691px;top:303.15px;width:3.6px;height:0.8px;background:#6a6a6a"></div>
<div class="b" style="left:692.4px;top:301.65px;width:0.8px;height:3.8px;background:#6a6a6a"></div>
<div class="b" style="left:1px;top:316px;width:696px;height:28px;background:#fff"></div>
<svg class="b" style="left:26px;top:319.5px" width="24" height="23" viewBox="0 0 24 23"><path d="M4.4 0.6H19L21.2 2.8V15L19 17.4H4.4L2.2 15V2.8Z" fill="#c8f0ec" stroke="#56606a" stroke-width="0.5"/><path d="M4.6 1.6H18.8L20.2 3V14.8L18.8 16.4H4.6L3.2 14.8V3Z" fill="#e8faf8"/><path d="M11 1.2H13M13 16.8H15M2.4 9V11" stroke="#333" stroke-width="0.7"/><rect x="0.6" y="15.6" width="4" height="5.4" fill="#fff" stroke="#e6e8ea" stroke-width="0.4"/><path d="M2.1 17V17.9M2.1 18.9V19.8" stroke="#333" stroke-width="0.8"/></svg>
<div class="b" style="left:20px;top:330px;width:2px;height:1px;background:#b4b4b4"></div>
<div class="b" style="left:53.5px;top:320.0px;width:385.5px;height:7.300000000000011px;background:#3c4d7a"></div>
<div class="t" style="left:146px;width:200px;text-align:center;top:321.62px;font-size:4.8px;color:#fff;font-weight:bold;font-style:normal;">TCFront Door Panel</div>
<div class="b" style="left:54px;top:331px;width:372px;height:9px;border:1px solid #f0f0f0;background:#fff"></div>
<svg class="b" style="left:429px;top:332.1px" width="8.2" height="8.2" viewBox="0 0 8.2 8.2"><rect x="0.5" y="0.5" width="7.2" height="7.2" fill="#fff" stroke="#a4a4a4" stroke-width="0.9"/><rect x="0.9" y="0.9" width="6.4" height="3.4" fill="#c4c4c4"/><path d="M6.2 1.6L7.2 2.6V4.8L5.6 6.6Z" fill="#fff"/><path d="M3.4 6.6L6.6 3.2" stroke="#3a3a3a" stroke-width="1.2"/></svg>
<div class="b" style="left:442px;top:326px;width:35px;height:9px;border:1px solid #f0f0f0;background:#fff"></div>
<div class="t" style="left:443.7px;top:328.34px;font-size:4.6px;color:#333;font-weight:normal;font-style:normal;">Mild Steel&nbsp; 2mm</div>
<div class="t" style="left:393.6px;width:200px;text-align:center;top:327.50px;font-size:5px;color:#333;font-weight:normal;font-style:normal;">1</div>
<div class="t" style="left:424px;width:200px;text-align:center;top:327.50px;font-size:5px;color:#dcdcdc;font-weight:normal;font-style:normal;">1</div>
<svg class="b" style="left:543.6px;top:327.1px" width="7.3" height="6.9" viewBox="0.2 1.2 16 15"><path d="M0.6 5.2L15.8 1.6V12.8L12.4 15.4L12.2 9L6 15.8L1.4 15.8L0.6 13.2L4.8 9.8L0.6 10.6Z" fill="#449be3"/><path d="M0.8 8.2L13.2 6.4M4.6 15.6L13.4 7.6" stroke="#b5ddf8" stroke-width="0.75" fill="none"/></svg>
<svg class="b" style="left:557.8px;top:327.4px" width="9.2" height="6.2" viewBox="0 0 19.6 12"><path d="M4 5H15.5L19.6 11.8H0.2Z" fill="#3b95de"/><path d="M3.2 6.6H16.4" stroke="#86c3ef" stroke-width="0.9"/><rect x="9.4" y="0" width="1" height="5.2" fill="#7c9c98"/></svg>
<div class="t" style="left:510.29999999999995px;width:200px;text-align:center;top:328.62px;font-size:4.8px;color:#333;font-weight:normal;font-style:normal;">£23.53</div>
<div class="t" style="left:530.5px;width:200px;text-align:center;top:328.62px;font-size:4.8px;color:#333;font-weight:normal;font-style:normal;">£23.53</div>
<div class="t" style="left:463px;width:200px;text-align:right;top:328.62px;font-size:4.8px;color:#333;font-weight:normal;font-style:normal;">1min 14s</div>
<div class="b" style="left:664px;top:326.00px;width:22.6px;height:9px;overflow:hidden"><div class="t" style="right:-1.6px;top:2.60px;font-size:4.9px;color:#333;font-style:italic">1min 14s</div></div>
<div class="b" style="left:691px;top:329.9px;width:3.6px;height:0.8px;background:#6a6a6a"></div>
<div class="b" style="left:692.4px;top:328.4px;width:0.8px;height:3.8px;background:#6a6a6a"></div>
<div class="b" style="left:1px;top:343px;width:696px;height:27px;background:#fff"></div>
<svg class="b" style="left:26px;top:352.25px" width="24" height="16" viewBox="0 0 24 16"><path d="M2 2.5H17.8L21.6 4.6L17.8 6.6H2L1.2 4.6Z" fill="#c8f0ec" stroke="#56606a" stroke-width="0.5"/><path d="M2.5 4H4.5M10 5.4H12" stroke="#333" stroke-width="0.6"/><rect x="1.4" y="8.8" width="4" height="5.4" fill="#fff" stroke="#e6e8ea" stroke-width="0.4"/><path d="M2.9 10.2V11.1M2.9 12.1V13" stroke="#333" stroke-width="0.8"/></svg>
<div class="b" style="left:20px;top:356px;width:2px;height:1px;background:#b4b4b4"></div>
<div class="b" style="left:53.5px;top:346.75px;width:385.5px;height:7.300000000000011px;background:#3c4d7a"></div>
<div class="t" style="left:146px;width:200px;text-align:center;top:348.37px;font-size:4.8px;color:#fff;font-weight:bold;font-style:normal;">TCHard Ware Front</div>
<div class="b" style="left:54px;top:358px;width:372px;height:9px;border:1px solid #f0f0f0;background:#fff"></div>
<svg class="b" style="left:429px;top:358.85px" width="8.2" height="8.2" viewBox="0 0 8.2 8.2"><rect x="0.5" y="0.5" width="7.2" height="7.2" fill="#fff" stroke="#a4a4a4" stroke-width="0.9"/><rect x="0.9" y="0.9" width="6.4" height="3.4" fill="#c4c4c4"/><path d="M6.2 1.6L7.2 2.6V4.8L5.6 6.6Z" fill="#fff"/><path d="M3.4 6.6L6.6 3.2" stroke="#3a3a3a" stroke-width="1.2"/></svg>
<div class="b" style="left:442px;top:353px;width:35px;height:9px;border:1px solid #f0f0f0;background:#fff"></div>
<div class="t" style="left:443.7px;top:355.09px;font-size:4.6px;color:#333;font-weight:normal;font-style:normal;">Mild Steel&nbsp; 2mm</div>
<div class="t" style="left:393.6px;width:200px;text-align:center;top:354.25px;font-size:5px;color:#333;font-weight:normal;font-style:normal;">1</div>
<div class="t" style="left:424px;width:200px;text-align:center;top:354.25px;font-size:5px;color:#dcdcdc;font-weight:normal;font-style:normal;">1</div>
<svg class="b" style="left:543.6px;top:353.85px" width="7.3" height="6.9" viewBox="0.2 1.2 16 15"><path d="M0.6 5.2L15.8 1.6V12.8L12.4 15.4L12.2 9L6 15.8L1.4 15.8L0.6 13.2L4.8 9.8L0.6 10.6Z" fill="#449be3"/><path d="M0.8 8.2L13.2 6.4M4.6 15.6L13.4 7.6" stroke="#b5ddf8" stroke-width="0.75" fill="none"/></svg>
<svg class="b" style="left:557.8px;top:354.15px" width="9.2" height="6.2" viewBox="0 0 19.6 12"><path d="M4 5H15.5L19.6 11.8H0.2Z" fill="#3b95de"/><path d="M3.2 6.6H16.4" stroke="#86c3ef" stroke-width="0.9"/><rect x="9.4" y="0" width="1" height="5.2" fill="#7c9c98"/></svg>
<div class="t" style="left:510.29999999999995px;width:200px;text-align:center;top:355.37px;font-size:4.8px;color:#333;font-weight:normal;font-style:normal;">£7.30</div>
<div class="t" style="left:530.5px;width:200px;text-align:center;top:355.37px;font-size:4.8px;color:#333;font-weight:normal;font-style:normal;">£7.30</div>
<div class="t" style="left:463px;width:200px;text-align:right;top:355.37px;font-size:4.8px;color:#333;font-weight:normal;font-style:normal;">30s</div>
<div class="b" style="left:664px;top:352.75px;width:22.6px;height:9px;overflow:hidden"><div class="t" style="right:-1.6px;top:2.60px;font-size:4.9px;color:#333;font-style:italic">30s</div></div>
<div class="b" style="left:691px;top:356.65px;width:3.6px;height:0.8px;background:#6a6a6a"></div>
<div class="b" style="left:692.4px;top:355.15px;width:0.8px;height:3.8px;background:#6a6a6a"></div>
<div class="b" style="left:1px;top:370px;width:696px;height:27px;background:#fff"></div>
<svg class="b" style="left:26px;top:376.0px" width="24" height="20" viewBox="0 0 24 20"><path d="M2.2 2.6Q2.4 1.4 3.6 1.4H9Q13 1.6 15 5.4Q16.4 8.6 18 8.8H21.4Q22.4 9 22.4 10.2V11.4H3Q2.2 11.4 2.2 10.4Z" fill="none" stroke="#56606a" stroke-width="0.5" stroke-dasharray="1 0.4"/><path d="M3 3.2H5M13 10.6H15" stroke="#333" stroke-width="0.6"/><rect x="1.4" y="12.4" width="4" height="5.4" fill="#fff" stroke="#e6e8ea" stroke-width="0.4"/><path d="M2.9 13.8V14.7M2.9 15.7V16.6" stroke="#333" stroke-width="0.8"/></svg>
<div class="b" style="left:20px;top:383px;width:2px;height:1px;background:#b4b4b4"></div>
<div class="b" style="left:53.5px;top:373.5px;width:385.5px;height:7.300000000000011px;background:#3c4d7a"></div>
<div class="t" style="left:146px;width:200px;text-align:center;top:375.12px;font-size:4.8px;color:#fff;font-weight:bold;font-style:normal;">TCHard Ware Store Left Side</div>
<div class="b" style="left:54px;top:385px;width:372px;height:9px;border:1px solid #f0f0f0;background:#fff"></div>
<svg class="b" style="left:429px;top:385.6px" width="8.2" height="8.2" viewBox="0 0 8.2 8.2"><rect x="0.5" y="0.5" width="7.2" height="7.2" fill="#fff" stroke="#a4a4a4" stroke-width="0.9"/><rect x="0.9" y="0.9" width="6.4" height="3.4" fill="#c4c4c4"/><path d="M6.2 1.6L7.2 2.6V4.8L5.6 6.6Z" fill="#fff"/><path d="M3.4 6.6L6.6 3.2" stroke="#3a3a3a" stroke-width="1.2"/></svg>
<div class="b" style="left:442px;top:380px;width:35px;height:9px;border:1px solid #f0f0f0;background:#fff"></div>
<div class="t" style="left:443.7px;top:381.84px;font-size:4.6px;color:#333;font-weight:normal;font-style:normal;">Mild Steel&nbsp; 2mm</div>
<div class="t" style="left:393.6px;width:200px;text-align:center;top:381.00px;font-size:5px;color:#333;font-weight:normal;font-style:normal;">1</div>
<div class="t" style="left:424px;width:200px;text-align:center;top:381.00px;font-size:5px;color:#dcdcdc;font-weight:normal;font-style:normal;">1</div>
<svg class="b" style="left:543.6px;top:380.6px" width="7.3" height="6.9" viewBox="0.2 1.2 16 15"><path d="M0.6 5.2L15.8 1.6V12.8L12.4 15.4L12.2 9L6 15.8L1.4 15.8L0.6 13.2L4.8 9.8L0.6 10.6Z" fill="#449be3"/><path d="M0.8 8.2L13.2 6.4M4.6 15.6L13.4 7.6" stroke="#b5ddf8" stroke-width="0.75" fill="none"/></svg>
<svg class="b" style="left:557.8px;top:380.9px" width="9.2" height="6.2" viewBox="0 0 19.6 12"><path d="M4 5H15.5L19.6 11.8H0.2Z" fill="#3b95de"/><path d="M3.2 6.6H16.4" stroke="#86c3ef" stroke-width="0.9"/><rect x="9.4" y="0" width="1" height="5.2" fill="#7c9c98"/></svg>
<div class="t" style="left:510.29999999999995px;width:200px;text-align:center;top:382.12px;font-size:4.8px;color:#333;font-weight:normal;font-style:normal;">£12.32</div>
<div class="t" style="left:530.5px;width:200px;text-align:center;top:382.12px;font-size:4.8px;color:#333;font-weight:normal;font-style:normal;">£12.32</div>
<div class="t" style="left:463px;width:200px;text-align:right;top:382.12px;font-size:4.8px;color:#333;font-weight:normal;font-style:normal;">1min 35s</div>
<div class="b" style="left:664px;top:379.50px;width:22.6px;height:9px;overflow:hidden"><div class="t" style="right:-1.6px;top:2.60px;font-size:4.9px;color:#333;font-style:italic">1min 35s</div></div>
<div class="b" style="left:691px;top:383.4px;width:3.6px;height:0.8px;background:#6a6a6a"></div>
<div class="b" style="left:692.4px;top:381.9px;width:0.8px;height:3.8px;background:#6a6a6a"></div>
<div class="b" style="left:1px;top:397px;width:696px;height:27px;background:#fff"></div>
<svg class="b" style="left:26px;top:400.25px" width="24" height="14" viewBox="0 0 24 14"><path d="M3 0.6H21L22 1.6V13H2V1.6Z" fill="#fff" stroke="#56606a" stroke-width="0.5"/><path d="M11 12.6H13" stroke="#333" stroke-width="0.6"/></svg>
<div class="b" style="left:20px;top:410px;width:2px;height:1px;background:#b4b4b4"></div>
<div class="b" style="left:53.5px;top:400.25px;width:385.5px;height:7.300000000000011px;background:#3c4d7a"></div>
<div class="t" style="left:146px;width:200px;text-align:center;top:401.87px;font-size:4.8px;color:#fff;font-weight:bold;font-style:normal;">TCHard Ware Store Rear Panel</div>
<div class="b" style="left:54px;top:411px;width:372px;height:9px;border:1px solid #f0f0f0;background:#fff"></div>
<svg class="b" style="left:429px;top:412.35px" width="8.2" height="8.2" viewBox="0 0 8.2 8.2"><rect x="0.5" y="0.5" width="7.2" height="7.2" fill="#fff" stroke="#a4a4a4" stroke-width="0.9"/><rect x="0.9" y="0.9" width="6.4" height="3.4" fill="#c4c4c4"/><path d="M6.2 1.6L7.2 2.6V4.8L5.6 6.6Z" fill="#fff"/><path d="M3.4 6.6L6.6 3.2" stroke="#3a3a3a" stroke-width="1.2"/></svg>
<div class="b" style="left:442px;top:406px;width:35px;height:9px;border:1px solid #f0f0f0;background:#fff"></div>
<div class="t" style="left:443.7px;top:408.59px;font-size:4.6px;color:#333;font-weight:normal;font-style:normal;">Mild Steel&nbsp; 2mm</div>
<div class="t" style="left:393.6px;width:200px;text-align:center;top:407.75px;font-size:5px;color:#333;font-weight:normal;font-style:normal;">1</div>
<div class="t" style="left:424px;width:200px;text-align:center;top:407.75px;font-size:5px;color:#dcdcdc;font-weight:normal;font-style:normal;">1</div>
<svg class="b" style="left:543.6px;top:407.35px" width="7.3" height="6.9" viewBox="0.2 1.2 16 15"><path d="M0.6 5.2L15.8 1.6V12.8L12.4 15.4L12.2 9L6 15.8L1.4 15.8L0.6 13.2L4.8 9.8L0.6 10.6Z" fill="#449be3"/><path d="M0.8 8.2L13.2 6.4M4.6 15.6L13.4 7.6" stroke="#b5ddf8" stroke-width="0.75" fill="none"/></svg>
<svg class="b" style="left:557.8px;top:407.65px" width="9.2" height="6.2" viewBox="0 0 19.6 12"><path d="M4 5H15.5L19.6 11.8H0.2Z" fill="#3b95de"/><path d="M3.2 6.6H16.4" stroke="#86c3ef" stroke-width="0.9"/><rect x="9.4" y="0" width="1" height="5.2" fill="#7c9c98"/></svg>
<div class="t" style="left:510.29999999999995px;width:200px;text-align:center;top:408.87px;font-size:4.8px;color:#333;font-weight:normal;font-style:normal;">£2.39</div>
<div class="t" style="left:530.5px;width:200px;text-align:center;top:408.87px;font-size:4.8px;color:#333;font-weight:normal;font-style:normal;">£2.39</div>
<div class="t" style="left:463px;width:200px;text-align:right;top:408.87px;font-size:4.8px;color:#333;font-weight:normal;font-style:normal;">18s</div>
<div class="b" style="left:664px;top:406.25px;width:22.6px;height:9px;overflow:hidden"><div class="t" style="right:-1.6px;top:2.60px;font-size:4.9px;color:#333;font-style:italic">18s</div></div>
<div class="b" style="left:691px;top:410.15px;width:3.6px;height:0.8px;background:#6a6a6a"></div>
<div class="b" style="left:692.4px;top:408.65px;width:0.8px;height:3.8px;background:#6a6a6a"></div>
<div class="b" style="left:19px;top:210px;width:1px;height:27px;background:#b0b0b0"></div>
<div class="b" style="left:1px;top:236px;width:696px;height:1px;background:#eaeaea"></div>
<div class="b" style="left:51px;top:210px;width:1px;height:26px;background:#ececec"></div>
<div class="b" style="left:440px;top:210px;width:1px;height:26px;background:#ececec"></div>
<div class="b" style="left:477px;top:210px;width:1px;height:26px;background:#ececec"></div>
<div class="b" style="left:508px;top:210px;width:1px;height:26px;background:#ececec"></div>
<div class="b" style="left:539px;top:210px;width:1px;height:26px;background:#ececec"></div>
<div class="b" style="left:598px;top:210px;width:1px;height:26px;background:#ececec"></div>
<div class="b" style="left:621px;top:210px;width:1px;height:26px;background:#ececec"></div>
<div class="b" style="left:639px;top:210px;width:1px;height:26px;background:#ececec"></div>
<div class="b" style="left:663px;top:210px;width:1px;height:26px;background:#ececec"></div>
<div class="b" style="left:688px;top:210px;width:1px;height:26px;background:#ececec"></div>
<div class="b" style="left:19px;top:236px;width:1px;height:27px;background:#b0b0b0"></div>
<div class="b" style="left:1px;top:262px;width:696px;height:1px;background:#eaeaea"></div>
<div class="b" style="left:51px;top:236px;width:1px;height:26px;background:#ececec"></div>
<div class="b" style="left:440px;top:236px;width:1px;height:26px;background:#ececec"></div>
<div class="b" style="left:477px;top:236px;width:1px;height:26px;background:#ececec"></div>
<div class="b" style="left:508px;top:236px;width:1px;height:26px;background:#ececec"></div>
<div class="b" style="left:539px;top:236px;width:1px;height:26px;background:#ececec"></div>
<div class="b" style="left:598px;top:236px;width:1px;height:26px;background:#ececec"></div>
<div class="b" style="left:621px;top:236px;width:1px;height:26px;background:#ececec"></div>
<div class="b" style="left:639px;top:236px;width:1px;height:26px;background:#ececec"></div>
<div class="b" style="left:663px;top:236px;width:1px;height:26px;background:#ececec"></div>
<div class="b" style="left:688px;top:236px;width:1px;height:26px;background:#ececec"></div>
<div class="b" style="left:19px;top:263px;width:1px;height:27px;background:#b0b0b0"></div>
<div class="b" style="left:1px;top:289px;width:696px;height:1px;background:#eaeaea"></div>
<div class="b" style="left:51px;top:263px;width:1px;height:26px;background:#ececec"></div>
<div class="b" style="left:440px;top:263px;width:1px;height:26px;background:#ececec"></div>
<div class="b" style="left:477px;top:263px;width:1px;height:26px;background:#ececec"></div>
<div class="b" style="left:508px;top:263px;width:1px;height:26px;background:#ececec"></div>
<div class="b" style="left:539px;top:263px;width:1px;height:26px;background:#ececec"></div>
<div class="b" style="left:598px;top:263px;width:1px;height:26px;background:#ececec"></div>
<div class="b" style="left:621px;top:263px;width:1px;height:26px;background:#ececec"></div>
<div class="b" style="left:639px;top:263px;width:1px;height:26px;background:#ececec"></div>
<div class="b" style="left:663px;top:263px;width:1px;height:26px;background:#ececec"></div>
<div class="b" style="left:688px;top:263px;width:1px;height:26px;background:#ececec"></div>
<div class="b" style="left:19px;top:290px;width:1px;height:27px;background:#b0b0b0"></div>
<div class="b" style="left:1px;top:316px;width:696px;height:1px;background:#eaeaea"></div>
<div class="b" style="left:51px;top:290px;width:1px;height:26px;background:#ececec"></div>
<div class="b" style="left:440px;top:290px;width:1px;height:26px;background:#ececec"></div>
<div class="b" style="left:477px;top:290px;width:1px;height:26px;background:#ececec"></div>
<div class="b" style="left:508px;top:290px;width:1px;height:26px;background:#ececec"></div>
<div class="b" style="left:539px;top:290px;width:1px;height:26px;background:#ececec"></div>
<div class="b" style="left:598px;top:290px;width:1px;height:26px;background:#ececec"></div>
<div class="b" style="left:621px;top:290px;width:1px;height:26px;background:#ececec"></div>
<div class="b" style="left:639px;top:290px;width:1px;height:26px;background:#ececec"></div>
<div class="b" style="left:663px;top:290px;width:1px;height:26px;background:#ececec"></div>
<div class="b" style="left:688px;top:290px;width:1px;height:26px;background:#ececec"></div>
<div class="b" style="left:19px;top:316px;width:1px;height:28px;background:#b0b0b0"></div>
<div class="b" style="left:1px;top:343px;width:696px;height:1px;background:#eaeaea"></div>
<div class="b" style="left:51px;top:316px;width:1px;height:27px;background:#ececec"></div>
<div class="b" style="left:440px;top:316px;width:1px;height:27px;background:#ececec"></div>
<div class="b" style="left:477px;top:316px;width:1px;height:27px;background:#ececec"></div>
<div class="b" style="left:508px;top:316px;width:1px;height:27px;background:#ececec"></div>
<div class="b" style="left:539px;top:316px;width:1px;height:27px;background:#ececec"></div>
<div class="b" style="left:598px;top:316px;width:1px;height:27px;background:#ececec"></div>
<div class="b" style="left:621px;top:316px;width:1px;height:27px;background:#ececec"></div>
<div class="b" style="left:639px;top:316px;width:1px;height:27px;background:#ececec"></div>
<div class="b" style="left:663px;top:316px;width:1px;height:27px;background:#ececec"></div>
<div class="b" style="left:688px;top:316px;width:1px;height:27px;background:#ececec"></div>
<div class="b" style="left:19px;top:343px;width:1px;height:27px;background:#b0b0b0"></div>
<div class="b" style="left:1px;top:369px;width:696px;height:1px;background:#eaeaea"></div>
<div class="b" style="left:51px;top:343px;width:1px;height:26px;background:#ececec"></div>
<div class="b" style="left:440px;top:343px;width:1px;height:26px;background:#ececec"></div>
<div class="b" style="left:477px;top:343px;width:1px;height:26px;background:#ececec"></div>
<div class="b" style="left:508px;top:343px;width:1px;height:26px;background:#ececec"></div>
<div class="b" style="left:539px;top:343px;width:1px;height:26px;background:#ececec"></div>
<div class="b" style="left:598px;top:343px;width:1px;height:26px;background:#ececec"></div>
<div class="b" style="left:621px;top:343px;width:1px;height:26px;background:#ececec"></div>
<div class="b" style="left:639px;top:343px;width:1px;height:26px;background:#ececec"></div>
<div class="b" style="left:663px;top:343px;width:1px;height:26px;background:#ececec"></div>
<div class="b" style="left:688px;top:343px;width:1px;height:26px;background:#ececec"></div>
<div class="b" style="left:19px;top:370px;width:1px;height:27px;background:#b0b0b0"></div>
<div class="b" style="left:1px;top:396px;width:696px;height:1px;background:#eaeaea"></div>
<div class="b" style="left:51px;top:370px;width:1px;height:26px;background:#ececec"></div>
<div class="b" style="left:440px;top:370px;width:1px;height:26px;background:#ececec"></div>
<div class="b" style="left:477px;top:370px;width:1px;height:26px;background:#ececec"></div>
<div class="b" style="left:508px;top:370px;width:1px;height:26px;background:#ececec"></div>
<div class="b" style="left:539px;top:370px;width:1px;height:26px;background:#ececec"></div>
<div class="b" style="left:598px;top:370px;width:1px;height:26px;background:#ececec"></div>
<div class="b" style="left:621px;top:370px;width:1px;height:26px;background:#ececec"></div>
<div class="b" style="left:639px;top:370px;width:1px;height:26px;background:#ececec"></div>
<div class="b" style="left:663px;top:370px;width:1px;height:26px;background:#ececec"></div>
<div class="b" style="left:688px;top:370px;width:1px;height:26px;background:#ececec"></div>
<div class="b" style="left:19px;top:397px;width:1px;height:27px;background:#b0b0b0"></div>
<div class="b" style="left:1px;top:423px;width:696px;height:1px;background:#eaeaea"></div>
<div class="b" style="left:51px;top:397px;width:1px;height:26px;background:#ececec"></div>
<div class="b" style="left:440px;top:397px;width:1px;height:26px;background:#ececec"></div>
<div class="b" style="left:477px;top:397px;width:1px;height:26px;background:#ececec"></div>
<div class="b" style="left:508px;top:397px;width:1px;height:26px;background:#ececec"></div>
<div class="b" style="left:539px;top:397px;width:1px;height:26px;background:#ececec"></div>
<div class="b" style="left:598px;top:397px;width:1px;height:26px;background:#ececec"></div>
<div class="b" style="left:621px;top:397px;width:1px;height:26px;background:#ececec"></div>
<div class="b" style="left:639px;top:397px;width:1px;height:26px;background:#ececec"></div>
<div class="b" style="left:663px;top:397px;width:1px;height:26px;background:#ececec"></div>
<div class="b" style="left:688px;top:397px;width:1px;height:26px;background:#ececec"></div>
<div class="b" style="left:1px;top:54px;width:696px;height:13px;background:#fff"></div>
<div class="b" style="left:0px;top:54px;width:702px;height:1px;background:#d6d6d6"></div>
<div class="b" style="left:1px;top:67px;width:696px;height:1px;background:#c4c8d4"></div>
<div class="b" style="left:51px;top:55px;width:1px;height:12px;background:#c2c2c2"></div>
<div class="b" style="left:440px;top:55px;width:1px;height:12px;background:#c2c2c2"></div>
<div class="b" style="left:477px;top:55px;width:1px;height:12px;background:#c2c2c2"></div>
<div class="b" style="left:508px;top:55px;width:1px;height:12px;background:#c2c2c2"></div>
<div class="b" style="left:539px;top:55px;width:1px;height:12px;background:#c2c2c2"></div>
<div class="b" style="left:598px;top:55px;width:1px;height:12px;background:#c2c2c2"></div>
<div class="b" style="left:621px;top:55px;width:1px;height:12px;background:#c2c2c2"></div>
<div class="b" style="left:639px;top:55px;width:1px;height:12px;background:#c2c2c2"></div>
<div class="b" style="left:663px;top:55px;width:1px;height:12px;background:#c2c2c2"></div>
<div class="b" style="left:688px;top:55px;width:1px;height:12px;background:#c2c2c2"></div>
<div class="t" style="left:-74px;width:200px;text-align:center;top:58.78px;font-size:5.2px;color:#333;font-weight:normal;font-style:normal;">Image</div>
<div class="t" style="left:146px;width:200px;text-align:center;top:58.78px;font-size:5.2px;color:#333;font-weight:normal;font-style:normal;">Designation</div>
<div class="t" style="left:391.5px;width:200px;text-align:center;top:55.30px;font-size:5px;color:#444;font-weight:normal;font-style:normal;">Unit</div>
<div class="t" style="left:391.5px;width:200px;text-align:center;top:61.30px;font-size:5px;color:#444;font-weight:normal;font-style:normal;">quantity</div>
<svg class="b" style="left:503.3px;top:59.4px" width="3.4" height="3.8" viewBox="0 0 3.4 3.8"><path d="M0 0H3.4L2.2 1.5V3.8H1.2V1.5Z" fill="#555"/></svg>
<div class="t" style="left:421.9px;width:200px;text-align:center;top:55.30px;font-size:5px;color:#444;font-weight:normal;font-style:normal;">Total</div>
<div class="t" style="left:421.9px;width:200px;text-align:center;top:61.30px;font-size:5px;color:#444;font-weight:normal;font-style:normal;">quantity</div>
<svg class="b" style="left:534.0999999999999px;top:59.4px" width="3.4" height="3.8" viewBox="0 0 3.4 3.8"><path d="M0 0H3.4L2.2 1.5V3.8H1.2V1.5Z" fill="#555"/></svg>
<div class="t" style="left:469px;width:200px;text-align:center;top:58.78px;font-size:5.2px;color:#333;font-weight:normal;font-style:normal;">Operations</div>
<div class="t" style="left:508.20000000000005px;width:200px;text-align:center;top:55.30px;font-size:5px;color:#444;font-weight:normal;font-style:normal;">Unit</div>
<div class="t" style="left:508.20000000000005px;width:200px;text-align:center;top:61.30px;font-size:5px;color:#444;font-weight:normal;font-style:normal;">price</div>
<svg class="b" style="left:616.4px;top:59.4px" width="3.4" height="3.8" viewBox="0 0 3.4 3.8"><path d="M0 0H3.4L2.2 1.5V3.8H1.2V1.5Z" fill="#555"/></svg>
<div class="t" style="left:530.7px;width:200px;text-align:center;top:55.30px;font-size:5px;color:#444;font-weight:normal;font-style:normal;">Total</div>
<div class="t" style="left:530.7px;width:200px;text-align:center;top:61.30px;font-size:5px;color:#444;font-weight:normal;font-style:normal;">price</div>
<div class="t" style="left:549.75px;width:200px;text-align:center;top:55.30px;font-size:5px;color:#444;font-weight:normal;font-style:normal;">Unit</div>
<div class="t" style="left:549.75px;width:200px;text-align:center;top:61.30px;font-size:5px;color:#444;font-weight:normal;font-style:normal;">time</div>
<svg class="b" style="left:658.5px;top:59.4px" width="3.4" height="3.8" viewBox="0 0 3.4 3.8"><path d="M0 0H3.4L2.2 1.5V3.8H1.2V1.5Z" fill="#555"/></svg>
<div class="t" style="left:575.6500000000001px;width:200px;text-align:center;top:55.30px;font-size:5px;color:#444;font-weight:normal;font-style:normal;">Total</div>
<div class="t" style="left:575.6500000000001px;width:200px;text-align:center;top:61.30px;font-size:5px;color:#444;font-weight:normal;font-style:normal;">time</div>
<div class="b" style="left:697px;top:54px;width:5px;height:358px;background:#f4f4f4"></div>
<div class="b" style="left:697px;top:54px;width:1px;height:358px;background:#e2e2e2"></div>
<div class="b" style="left:699px;top:143px;width:1px;height:262px;background:#b8b8b8"></div>
<svg class="b" style="left:698.4px;top:56.5px" width="2.4" height="2" viewBox="0 0 2.4 2"><path d="M0 2L1.2 0L2.4 2Z" fill="#555"/></svg>
<svg class="b" style="left:698.4px;top:408.2px" width="2.4" height="2" viewBox="0 0 2.4 2"><path d="M0 0L1.2 2L2.4 0Z" fill="#555"/></svg>
<div class="b" style="left:0px;top:117px;width:1px;height:93px;background:#dedede"></div>
</body></html>
